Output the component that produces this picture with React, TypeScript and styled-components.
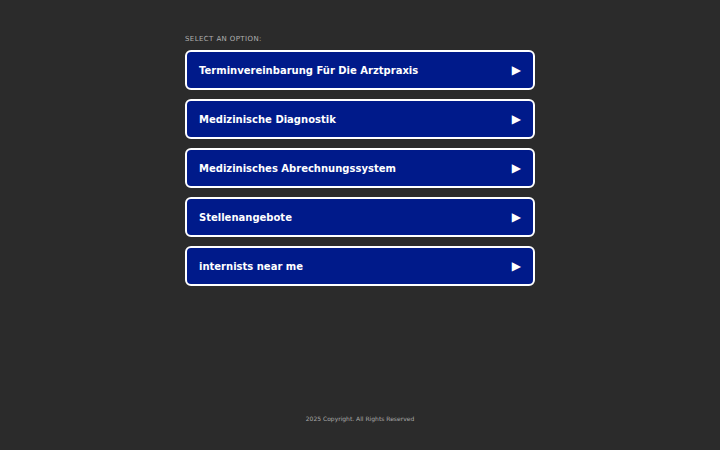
import React from "react";
import styled, { createGlobalStyle } from "styled-components";

const GlobalStyle = createGlobalStyle`
  html, body {
    margin: 0;
    padding: 0;
    background: #2b2b2b;
    font-family: "DejaVu Sans", "Liberation Sans", sans-serif;
  }
`;

const Page = styled.div`
  height: 450px;
  display: flex;
  flex-direction: column;
  align-items: center;
`;

const Main = styled.div`
  width: 350px;
  padding-top: 35px;
  flex: 1;
`;

const Label = styled.div`
  font-size: 7px;
  letter-spacing: 0.4px;
  color: #b0b0b0;
  text-transform: uppercase;
  margin-bottom: 7px;
`;

const List = styled.div`
  display: flex;
  flex-direction: column;
  gap: 9px;
`;

const Option = styled.a`
  box-sizing: border-box;
  height: 40px;
  display: flex;
  align-items: center;
  justify-content: space-between;
  padding: 0 12px;
  background: #001a8a;
  border: 2px solid #ffffff;
  border-radius: 6px;
  color: #ffffff;
  font-weight: bold;
  font-size: 10px;
  text-decoration: none;
  cursor: pointer;
`;

const Arrow = styled.span`
  font-size: 12px;
`;

const Footer = styled.div`
  font-size: 6px;
  color: #a9a9a9;
  padding-bottom: 28px;
`;

const options = [
  "Terminvereinbarung Für Die Arztpraxis",
  "Medizinische Diagnostik",
  "Medizinisches Abrechnungssystem",
  "Stellenangebote",
  "internists near me",
];

export default function App() {
  return (
    <>
      <GlobalStyle />
      <Page>
        <Main>
          <Label>Select an option:</Label>
          <List>
            {options.map((o) => (
              <Option key={o}>
                <span>{o}</span>
                <Arrow>▶</Arrow>
              </Option>
            ))}
          </List>
        </Main>
        <Footer>2025 Copyright. All Rights Reserved</Footer>
      </Page>
    </>
  );
}
